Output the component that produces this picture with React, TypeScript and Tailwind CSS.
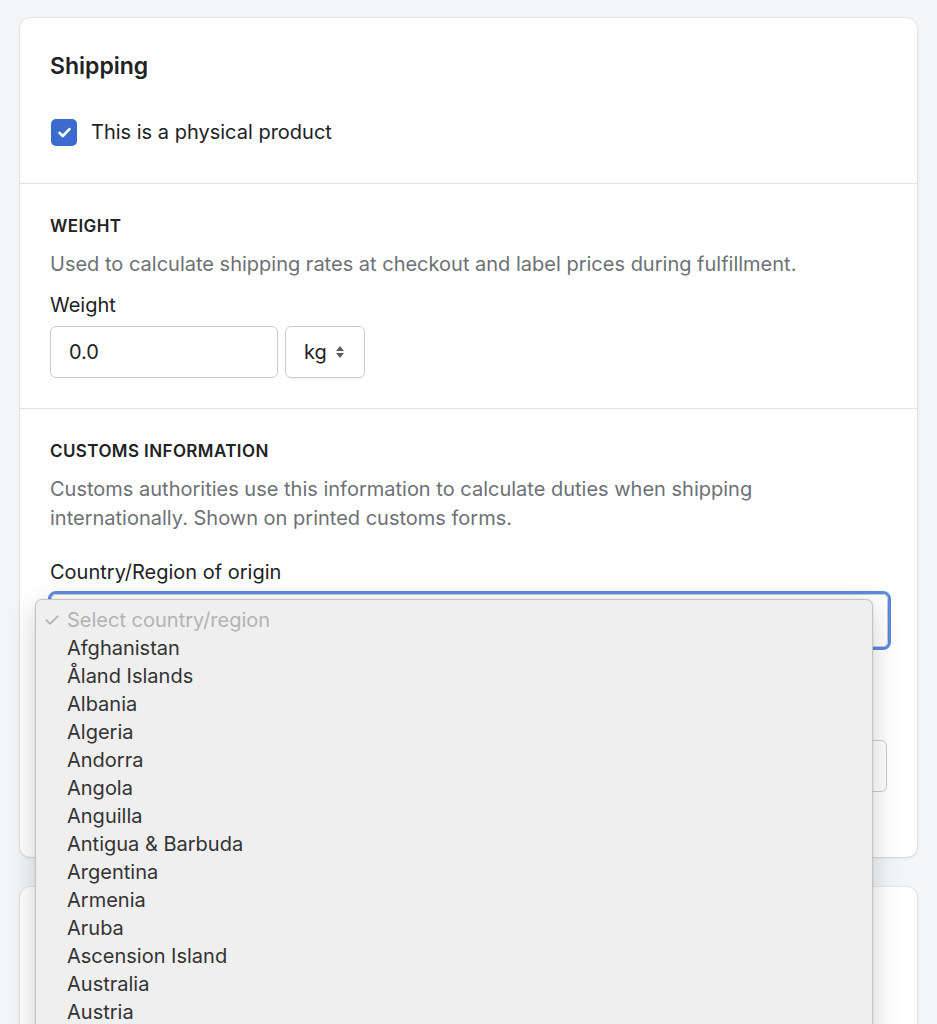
import React from "react";

const countries = [
  "Afghanistan",
  "Åland Islands",
  "Albania",
  "Algeria",
  "Andorra",
  "Angola",
  "Anguilla",
  "Antigua & Barbuda",
  "Argentina",
  "Armenia",
  "Aruba",
  "Ascension Island",
  "Australia",
  "Austria",
];

export default function App() {
  return (
    <div
      className="min-h-screen bg-[#f4f5f6] px-[20px] pt-[18px] overflow-hidden h-[1024px]"
      style={{ fontFamily: "Inter, 'Noto Sans', sans-serif" }}
    >
      {/* Shipping card */}
      <div className="bg-white rounded-[10px] shadow-[0_0_0_1px_rgba(63,63,68,0.05),0_1px_3px_rgba(63,63,68,0.15)]">
        {/* Header */}
        <div className="px-[30px] pt-[34px] pb-[37px]">
          <h2 className="text-[23px] leading-[28px] font-semibold text-[#202223]">Shipping</h2>
          <label className="mt-[39px] flex items-center gap-[14px]">
            <span className="ml-[1px] w-[26px] h-[27px] rounded-[5px] bg-[#3b6ccd] flex items-center justify-center">
              <svg viewBox="0 0 20 20" className="w-[19px] h-[19px]" fill="none">
                <path d="M4.8 10.4l3.4 3.3L15.2 6.4" stroke="white" strokeWidth="2.8" strokeLinecap="round" strokeLinejoin="round" />
              </svg>
            </span>
            <span className="text-[20px] leading-[27px] text-[#202223]">This is a physical product</span>
          </label>
        </div>

        {/* Weight */}
        <div className="border-t border-[#e1e3e5] px-[30px] pt-[31px] pb-[30px]">
          <h3 className="text-[17px] leading-[22px] font-semibold tracking-[0.4px] text-[#202223]">WEIGHT</h3>
          <p className="mt-[13px] text-[20px] leading-[28px] text-[#6d7175]">
            Used to calculate shipping rates at checkout and label prices during fulfillment.
          </p>
          <p className="mt-[13px] text-[20px] leading-[28px] text-[#202223]">Weight</p>
          <div className="mt-[7px] flex gap-[7px]">
            <div className="w-[228px] h-[52px] border border-[#c9cccf] rounded-[6px] flex items-center px-[18px] text-[20px] text-[#202223]">
              0.0
            </div>
            <div className="w-[80px] h-[52px] border border-[#c9cccf] rounded-[6px] shadow-[0_1px_0_rgba(0,0,0,0.05)] flex items-center pl-[18px] gap-[8px] text-[20px] text-[#202223]">
              kg
              <svg viewBox="0 0 10 14" className="w-[10px] h-[14px]">
                <path d="M5 1L9 6H1z" fill="#5c5f62" />
                <path d="M5 13L1 8h8z" fill="#5c5f62" />
              </svg>
            </div>
          </div>
        </div>

        {/* Customs information */}
        <div className="relative border-t border-[#e1e3e5] px-[30px] pt-[31px] pb-[30px]">
          <h3 className="text-[17px] leading-[22px] font-semibold tracking-[0.4px] text-[#202223]">CUSTOMS INFORMATION</h3>
          <p className="mt-[13px] text-[20px] leading-[29px] text-[#6d7175]">
            Customs authorities use this information to calculate duties when shipping
            <br />
            internationally. Shown on printed customs forms.
          </p>
          <p className="mt-[25px] text-[20px] leading-[28px] text-[#202223]">Country/Region of origin</p>
          <div className="mt-[5px] -ml-[2px] -mr-[4px] rounded-[8px] border-[3px] border-[#5b8ae0]">
            <div className="h-[53px] rounded-[5px] border border-[#c9cccf] bg-white" />
          </div>
          {/* HS code field, hidden behind the open menu */}
          <div className="mt-[54px] h-[28px]" />
          <div className="mt-[8px] h-[52px] border border-[#c9cccf] rounded-[6px]" />
          <div className="h-[35px]" />

          {/* Open select menu */}
          <div className="absolute left-[15px] top-[190px] w-[838px] h-[520px] z-10 overflow-hidden bg-[#efefef] border border-[#c4c4c4] rounded-[7px] shadow-[0_8px_30px_rgba(0,0,0,0.18),0_0_0_0.5px_rgba(0,0,0,0.08)] pt-[6px]">
            <div className="flex items-center h-[28px] text-[20px] text-[#b3b3b3]">
              <span className="w-[31px] pl-[7px]">✓</span>
              <span>Select country/region</span>
            </div>
            {countries.map((c) => (
              <div key={c} className="flex items-center h-[28px] pl-[31px] text-[20px] text-[#333333]">
                {c}
              </div>
            ))}
          </div>
        </div>
      </div>

      {/* Next card */}
      <div className="mt-[30px] h-[200px] bg-white rounded-[10px] shadow-[0_0_0_1px_rgba(63,63,68,0.05),0_1px_3px_rgba(63,63,68,0.15)]" />
    </div>
  );
}
